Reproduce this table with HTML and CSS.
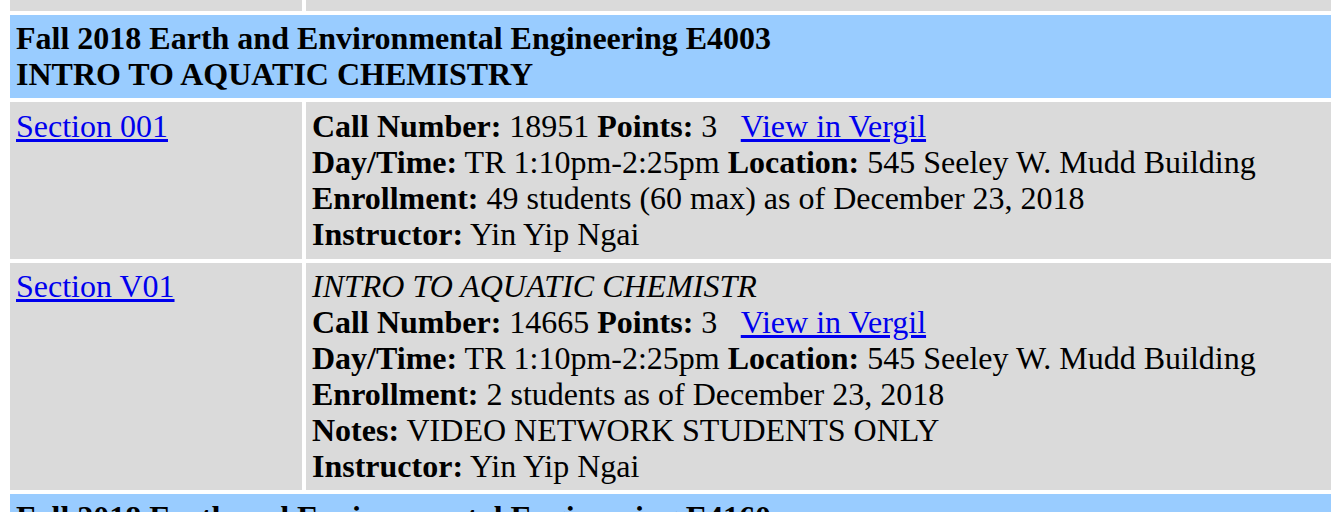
FILE: index.html
```html
<!DOCTYPE html>
<html>
<head>
<meta charset="utf-8">
<link rel="stylesheet" href="styles.css">
</head>
<body>
<div class="table">
  <div class="cell prev"></div>
  <div class="cell prev"></div>

  <div class="cell head"><b>Fall 2018 Earth and Environmental Engineering E4003<br>INTRO TO AQUATIC CHEMISTRY</b></div>

  <div class="cell row-a"><a href="#">Section 001</a></div>
  <div class="cell row-a">
    <b>Call Number:</b> 18951 <b>Points:</b> 3 &nbsp; <a href="#">View in Vergil</a><br>
    <b>Day/Time:</b> TR 1:10pm-2:25pm <b>Location:</b> 545 Seeley W. Mudd Building<br>
    <b>Enrollment:</b> 49 students (60 max) as of December 23, 2018<br>
    <b>Instructor:</b> Yin Yip Ngai
  </div>

  <div class="cell"><a href="#">Section V01</a></div>
  <div class="cell">
    <i>INTRO TO AQUATIC CHEMISTR</i><br>
    <b>Call Number:</b> 14665 <b>Points:</b> 3 &nbsp; <a href="#">View in Vergil</a><br>
    <b>Day/Time:</b> TR 1:10pm-2:25pm <b>Location:</b> 545 Seeley W. Mudd Building<br>
    <b>Enrollment:</b> 2 students as of December 23, 2018<br>
    <b>Notes:</b> VIDEO NETWORK STUDENTS ONLY<br>
    <b>Instructor:</b> Yin Yip Ngai
  </div>

  <div class="cell head"><b>Fall 2018 Earth and Environmental Engineering E4160</b></div>
</div>
</body>
</html>
```
FILE: styles.css
```css
html, body {
  margin: 0;
  padding: 0;
  overflow: hidden;
  background: #ffffff;
}
body {
  font-family: "Liberation Serif", "Times New Roman", serif;
  font-size: 32px;
  line-height: 36px;
  color: #000000;
}
.table {
  display: grid;
  grid-template-columns: 292px 1200px;
  gap: 4px;
  margin-left: 10px;
  width: 1496px;
}
.cell {
  background: #dadada;
  padding: 5px 6px 6px 6px;
  white-space: nowrap;
}
.cell.row-a {
  padding-top: 6px;
  padding-bottom: 7px;
}
.cell.prev {
  height: 11px;
  padding: 0;
}
.cell.head {
  grid-column: 1 / span 2;
  background: #99ccff;
}
a {
  color: #0000ee;
  text-decoration: underline;
}
```
